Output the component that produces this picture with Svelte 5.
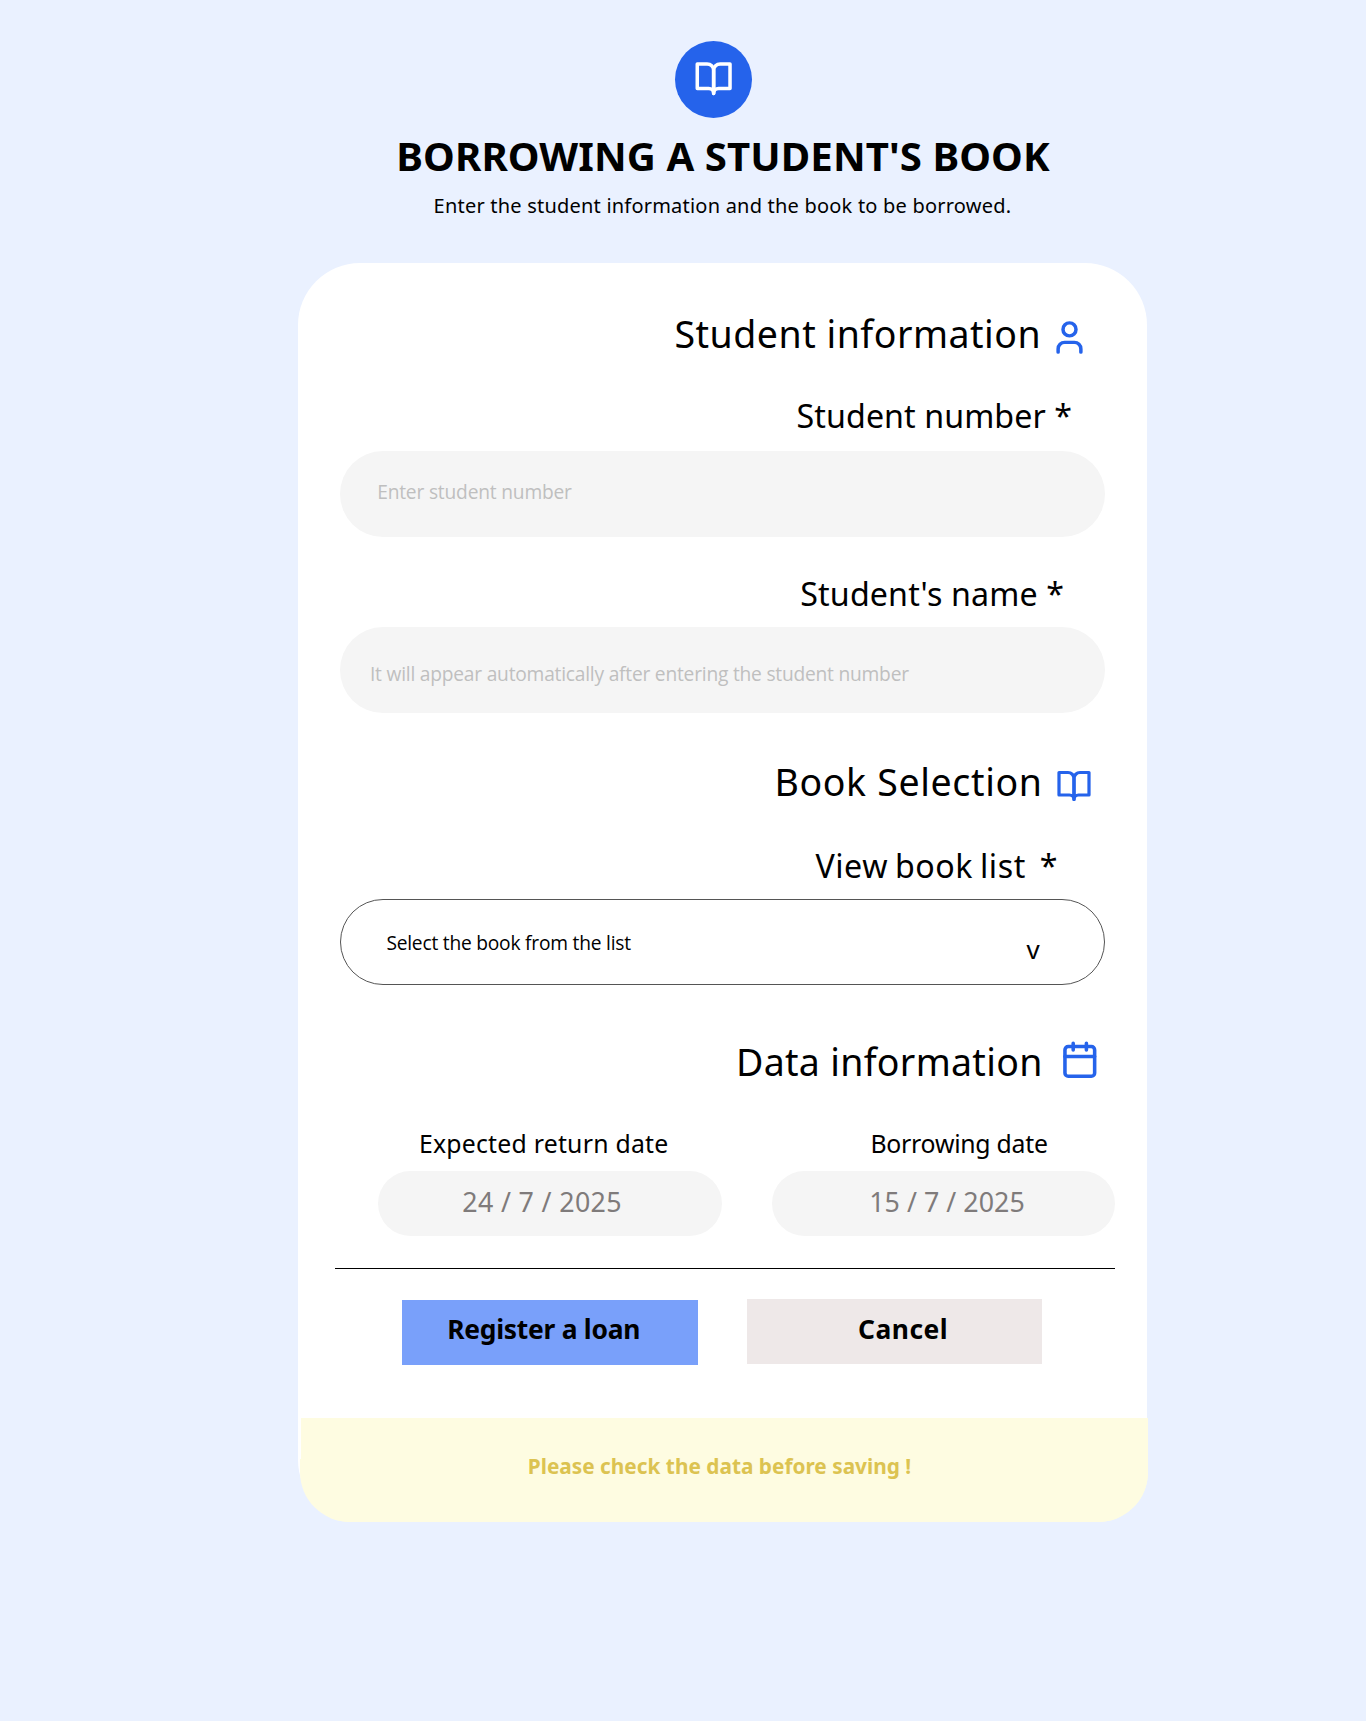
<script>
  const today = '15 / 7 / 2025';
  const due = '24 / 7 / 2025';
</script>

{#snippet book()}
  <svg class="icon" viewBox="0 0 24 24" aria-hidden="true">
    <path d="M2 3h6a4 4 0 0 1 4 4v14a3 3 0 0 0-3-3H2z" />
    <path d="M22 3h-6a4 4 0 0 0-4 4v14a3 3 0 0 1 3-3h7z" />
  </svg>
{/snippet}

<div class="page">
  <header>
    <div class="logo">{@render book()}</div>
    <h1>BORROWING A STUDENT'S BOOK</h1>
    <p class="subtitle">Enter the student information and the book to be borrowed.</p>
  </header>

  <main class="card">
    <div class="heading student">
      <h2>Student information</h2>
      <svg class="icon" viewBox="0 0 24 24" aria-hidden="true">
        <path d="M19 21v-2a4 4 0 0 0-4-4H9a4 4 0 0 0-4 4v2" />
        <circle cx="12" cy="7" r="4" />
      </svg>
    </div>
    <div class="label number">Student number *</div>
    <div class="field field-number">Enter student number</div>
    <div class="label name">Student's name *</div>
    <div class="field field-name">It will appear automatically after entering the student number</div>

    <div class="heading selection">
      <h2>Book Selection</h2>
      {@render book()}
    </div>
    <div class="label list">View book list&nbsp; *</div>
    <div class="select">
      <span class="choice">Select the book from the list</span>
      <span class="arrow">v</span>
    </div>

    <div class="heading dates-heading">
      <h2>Data information</h2>
      <svg class="icon" viewBox="0 0 24 24" aria-hidden="true">
        <rect x="3" y="4" width="18" height="18" rx="2" />
        <path d="M8 2v4M16 2v4M3 10h18" />
      </svg>
    </div>
    <div class="dates">
      <div class="date return">
        <div class="date-label">Expected return date</div>
        <div class="pill">{due}</div>
      </div>
      <div class="date borrow">
        <div class="date-label">Borrowing date</div>
        <div class="pill">{today}</div>
      </div>
    </div>

    <div class="divider"></div>

    <div class="actions">
      <button class="register">Register a loan</button>
      <button class="cancel">Cancel</button>
    </div>

    <footer><span>Please check the data before saving !</span></footer>
  </main>
</div>

<style>
  :global(body) { background: #eaf1ff; }
  .page {
    box-sizing: border-box;
    width: 1366px;
    height: 1721px;
    padding-top: 40.5px;
    overflow: hidden;
    background: #eaf1ff;
    color: #000;
    font-family: 'Noto Sans', sans-serif;
    white-space: nowrap;
  }
  h1, h2, p { margin: 0; font-weight: 400; }
  .icon {
    display: block;
    flex: none;
    fill: none;
    stroke: #2563eb;
    stroke-width: 2.15;
    stroke-linecap: round;
    stroke-linejoin: round;
  }

  .logo {
    display: flex;
    justify-content: center;
    box-sizing: border-box;
    width: 77px;
    height: 77px;
    margin-left: 675px;
    padding-top: 18.6px;
    border-radius: 50%;
    background: #2563eb;
  }
  .logo .icon { width: 39.3px; height: 39.3px; stroke: #fff; }
  h1 {
    margin: 18px 0 0 396.3px;
    font-size: 40.2px;
    font-weight: 700;
    line-height: 40px;
    letter-spacing: 0.08px;
  }
  .subtitle {
    margin: 18.4px 0 0 433.6px;
    font-size: 20px;
    line-height: 24px;
    letter-spacing: 0.21px;
  }

  .card {
    box-sizing: border-box;
    width: 848.8px;
    height: 1259px;
    margin: 45px 0 0 298.2px;
    padding-top: 48.8px;
    border-radius: 62px;
    background: #fff;
  }

  .heading { display: flex; height: 44px; }
  h2 { flex: none; padding-top: 0.7px; font-size: 37.5px; line-height: 44px; }
  .student { padding-left: 376.3px; }
  .student h2 { width: 375.6px; letter-spacing: 0.5px; }
  .student .icon { width: 39px; height: 39px; margin-top: 6.2px; }
  .selection { margin-top: 46.5px; padding-left: 476.2px; }
  .selection h2 { width: 281.2px; letter-spacing: 0.65px; }
  .selection .icon { width: 36px; height: 36px; margin-top: 8.5px; }
  .dates-heading { margin-top: 54.1px; padding-left: 437.8px; }
  .dates-heading h2 { width: 324.1px; letter-spacing: 0.3px; }
  .dates-heading .icon { width: 39.6px; height: 39.6px; }

  .label { font-size: 32.2px; line-height: 36px; }
  .number { margin: 42.4px 0 16.5px 498.4px; letter-spacing: 0.08px; }
  .name { margin: 38.9px 0 14.5px 502.1px; letter-spacing: 0.14px; }
  .list {
    margin: 44.3px 0 14.9px 517.2px;
    letter-spacing: 0.55px;
    word-spacing: -2px;
  }

  .field, .select {
    box-sizing: border-box;
    width: 765px;
    height: 86.6px;
    margin-left: 41.8px;
    border-radius: 43.3px;
    font-family: 'Open Sans', sans-serif;
    font-size: 19.2px;
    line-height: 24px;
  }
  .field { background: #f5f5f5; color: #bfbfbf; }
  .field-number { padding: 29.5px 0 0 37.2px; letter-spacing: -0.19px; }
  .field-name { padding: 35.8px 0 0 30px; letter-spacing: -0.22px; }
  .select {
    display: flex;
    justify-content: space-between;
    padding: 31.5px 64.2px 0 45.4px;
    border: 1px solid #555;
  }
  .choice { letter-spacing: -0.22px; }
  .arrow {
    margin-top: 3.5px;
    font-family: 'Noto Sans', sans-serif;
    font-size: 26px;
    line-height: 28px;
  }

  .dates { display: flex; gap: 49.7px; margin: 44.2px 0 0 79.5px; }
  .return { width: 344.3px; }
  .borrow { width: 343.3px; }
  .date-label { margin-bottom: 13.1px; font-size: 24.8px; line-height: 30px; }
  .return .date-label { padding-left: 41.2px; letter-spacing: 0.24px; }
  .borrow .date-label { padding-left: 98.8px; letter-spacing: -0.24px; }
  .pill {
    box-sizing: border-box;
    height: 65px;
    padding-top: 14.8px;
    border-radius: 32.5px;
    background: #f5f5f5;
    color: #7f7b7b;
    font-size: 26.8px;
    line-height: 32px;
  }
  .return .pill { padding-left: 84.5px; letter-spacing: 0.36px; }
  .borrow .pill { padding-left: 97.5px; letter-spacing: 0.04px; }

  .divider { width: 780.4px; height: 1px; margin: 31.9px 0 0 36.4px; background: #000; }

  .actions {
    display: flex;
    align-items: flex-start;
    gap: 49px;
    height: 65.6px;
    margin: 30px 0 0 103.8px;
  }
  button {
    display: flex;
    align-items: flex-start;
    box-sizing: border-box;
    height: 64.8px;
    border: 0;
    color: #000;
    font: 700 26.4px/32px 'Noto Sans', sans-serif;
  }
  .register {
    width: 296px;
    margin-top: 1px;
    padding: 13.7px 0 0 45.2px;
    background: #79a0fa;
    letter-spacing: -0.25px;
  }
  .cancel {
    width: 295.5px;
    padding: 14.7px 0 0 111px;
    background: #eee8e8;
    letter-spacing: 0.5px;
  }

  footer {
    position: relative;
    box-sizing: border-box;
    width: 847px;
    height: 104px;
    margin: 53.6px 0 0 3px;
    padding: 35.1px 0 0 226.6px;
    border-radius: 0 0 50px 50px;
    background: #fefce1;
    color: #dcc351;
    font-size: 20.8px;
    font-weight: 700;
    line-height: 26px;
    letter-spacing: 0.01px;
  }
  /* Lower part of the notice runs slightly past its left edge. */
  footer::before {
    content: '';
    position: absolute;
    inset: 41px 0.5px 0 -1.7px;
    border-radius: 0 0 50px 50px;
    background: #fefce1;
  }
  footer span { position: relative; }
</style>
